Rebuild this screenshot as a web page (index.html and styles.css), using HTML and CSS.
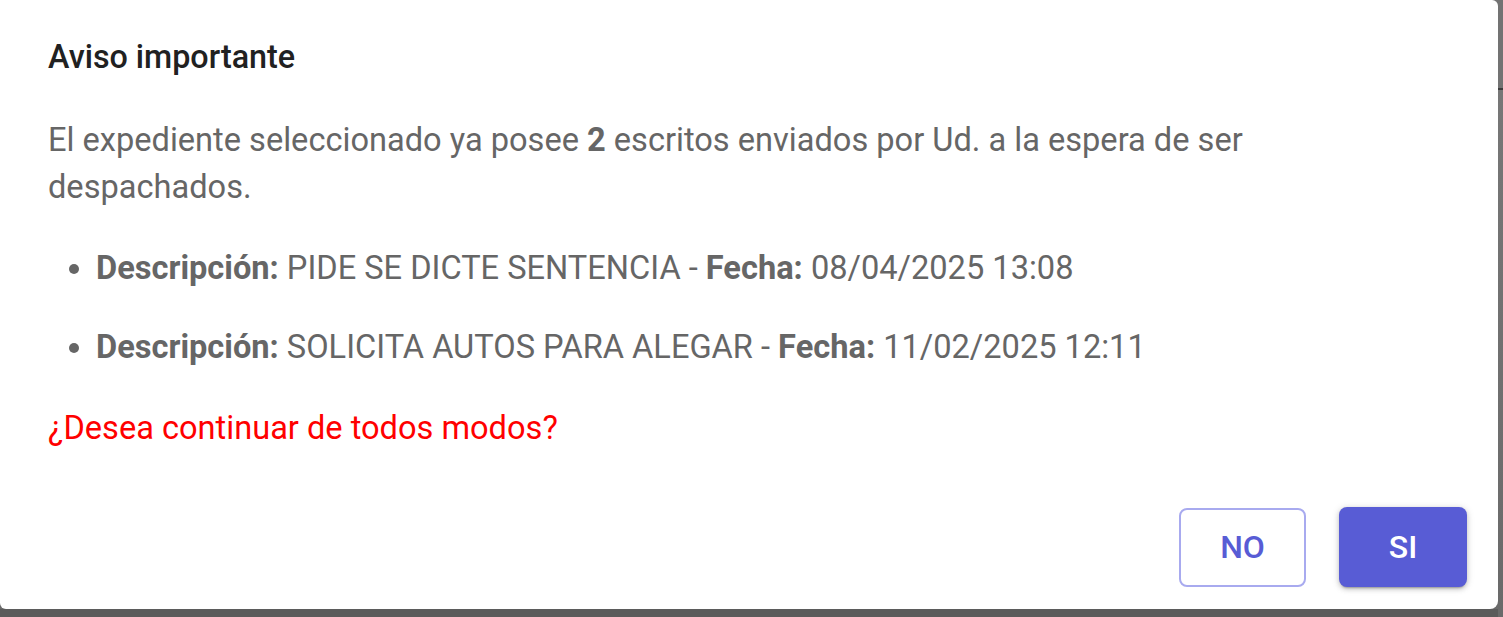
FILE: index.html
```html
<!DOCTYPE html>
<html lang="es">
<head>
<meta charset="utf-8">
<title>Aviso importante</title>
<link rel="stylesheet" href="styles.css">
</head>
<body>
<div class="backdrop">
  <div class="dialog" role="dialog">
    <h2 class="title">Aviso importante</h2>
    <div class="content">
      <p class="text">El expediente seleccionado ya posee <strong>2</strong> escritos enviados por Ud. a la espera de ser despachados.</p>
      <ul class="items">
        <li><strong>Descripción:</strong> PIDE SE DICTE SENTENCIA - <strong>Fecha:</strong> 08/04/2025 13:08</li>
        <li><strong>Descripción:</strong> SOLICITA AUTOS PARA ALEGAR - <strong>Fecha:</strong> 11/02/2025 12:11</li>
      </ul>
      <p class="question">¿Desea continuar de todos modos?</p>
    </div>
    <div class="actions">
      <button class="btn btn-outline">NO</button>
      <button class="btn btn-primary">SI</button>
    </div>
  </div>
</div>
</body>
</html>
```
FILE: styles.css
```css
html, body {
  margin: 0;
  padding: 0;
  height: 100%;
}
body {
  font-family: Roboto, "Liberation Sans", Arial, sans-serif;
  background: linear-gradient(to bottom, #737373 0, #737373 88px, #3c3c3c 88px, #3c3c3c 90px, #777777 90px, #6a6a6a 100%);
  overflow: hidden;
}
.backdrop {
  width: 1498px;
  height: 617px;
  background: linear-gradient(to bottom, transparent 0, transparent 609px, #5b5b5b 609px);
}
.dialog {
  box-sizing: border-box;
  width: 1498px;
  height: 609px;
  background: #ffffff;
  border-radius: 0 6px 8px 6px;
  padding: 34px 31px 22px 48px;
  display: flex;
  flex-direction: column;
}
.title {
  margin: 0;
  font-size: 32.3px;
  line-height: 47px;
  font-weight: 500;
  color: #212121;
}
.content {
  font-size: 32.6px;
  line-height: 47px;
  color: #666666;
  padding-top: 36px;
}
.text {
  margin: 0 0 34px 0;
  max-width: 1300px;
}
.text strong, .items strong {
  font-weight: 700;
}
.items {
  margin: 0;
  padding-left: 48px;
}
.items li {
  margin-bottom: 32px;
}
.items li:last-child {
  margin-bottom: 0;
}
.question {
  margin: 34px 0 0 0;
  color: #ff0000;
}
.actions {
  margin-top: auto;
  display: flex;
  justify-content: flex-end;
  align-items: center;
  gap: 33px;
}
.btn {
  font-family: Roboto, "Liberation Sans", Arial, sans-serif;
  font-size: 32px;
  font-weight: 500;
  border-radius: 8px;
  cursor: pointer;
  box-sizing: border-box;
}
.btn-outline {
  width: 127px;
  height: 79px;
  background: #ffffff;
  color: #585cd5;
  border: 2px solid #a8aaef;
}
.btn-primary {
  width: 128px;
  height: 80px;
  background: #585cd5;
  color: #ffffff;
  border: none;
  box-shadow: 0 3px 2px -2px rgba(0,0,0,0.25), 0 2px 5px 0 rgba(0,0,0,0.18), 0 1px 8px 0 rgba(0,0,0,0.12);
}
```
